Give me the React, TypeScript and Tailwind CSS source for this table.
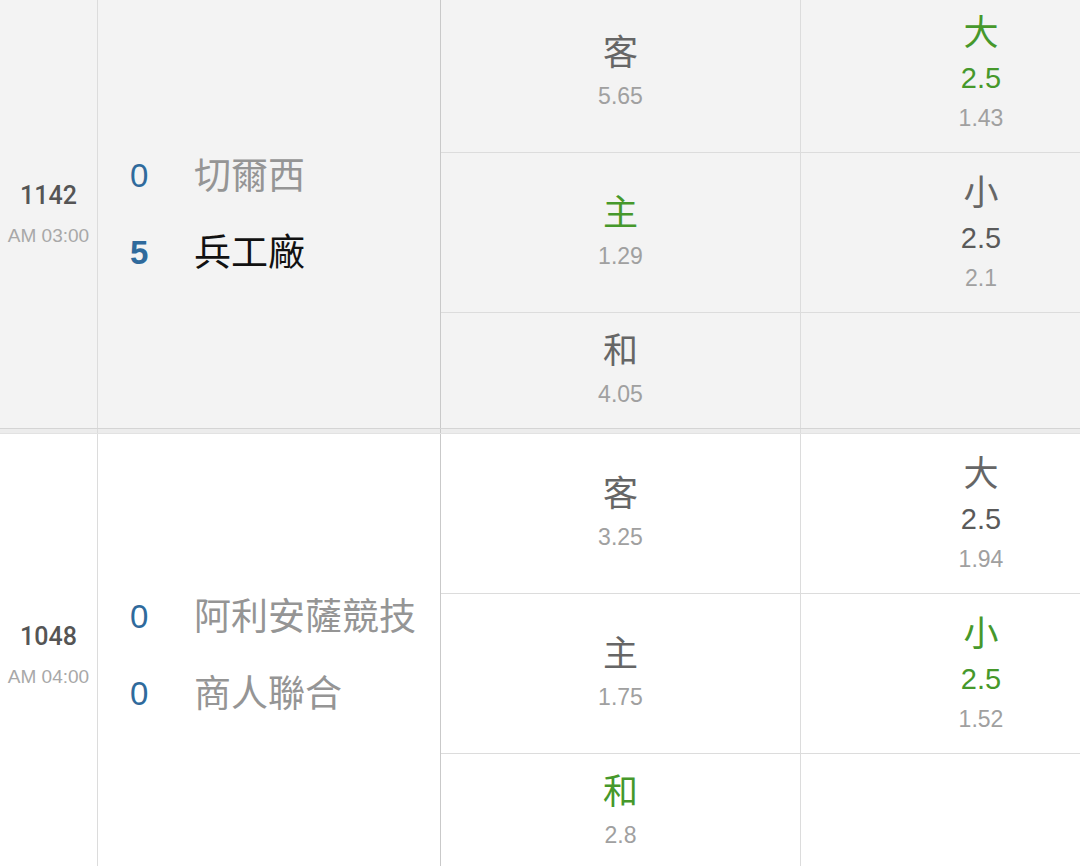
import React from "react";

type Odd = { label: string; value: string; green?: boolean };
type OU = { label: string; line: string; value: string; green?: boolean } | null;

type Match = {
  id: string;
  time: string;
  bg: string;
  away: { name: string; score: string; win?: boolean };
  home: { name: string; score: string; win?: boolean };
  odds: Odd[];
  ou: OU[];
};

const FONT = { fontFamily: '"Liberation Sans", "Noto Sans CJK TC", sans-serif' };
const CJK = { fontFamily: '"Noto Sans CJK TC", sans-serif' };

const matches: Match[] = [
  {
    id: "1142",
    time: "AM 03:00",
    bg: "bg-[#f3f3f3]",
    away: { name: "切爾西", score: "0" },
    home: { name: "兵工廠", score: "5", win: true },
    odds: [
      { label: "客", value: "5.65" },
      { label: "主", value: "1.29", green: true },
      { label: "和", value: "4.05" },
    ],
    ou: [
      { label: "大", line: "2.5", value: "1.43", green: true },
      { label: "小", line: "2.5", value: "2.1" },
      null,
    ],
  },
  {
    id: "1048",
    time: "AM 04:00",
    bg: "bg-white",
    away: { name: "阿利安薩競技", score: "0" },
    home: { name: "商人聯合", score: "0" },
    odds: [
      { label: "客", value: "3.25" },
      { label: "主", value: "1.75" },
      { label: "和", value: "2.8", green: true },
    ],
    ou: [
      { label: "大", line: "2.5", value: "1.94" },
      { label: "小", line: "2.5", value: "1.52", green: true },
      null,
    ],
  },
];

const rowH = ["h-[160px] border-b border-[#dcdcdc]", "h-[160px] border-b border-[#dcdcdc]", "h-[115px]"];

function TeamLine({ name, score, win, dim }: { name: string; score: string; win?: boolean; dim: boolean }) {
  return (
    <div className="flex h-[77px] items-center">
      <div
        className={`w-[60px] pl-[32px] pt-[5px] text-[33px] leading-none text-[#2f6a9c] ${win ? "font-bold" : "font-normal"}`}
      >
        {score}
      </div>
      <div
        className={`ml-[36px] text-[37px] leading-none ${dim ? "text-[#959595]" : "text-[#111]"}`}
        style={CJK}
      >
        {name}
      </div>
    </div>
  );
}

function Block({ m }: { m: Match }) {
  const anyWin = m.away.win || m.home.win;
  return (
    <div className={`flex ${m.bg}`} style={FONT}>
      <div className="flex w-[98px] shrink-0 flex-col items-center justify-center border-r border-[#dcdcdc] pt-[7px]">
        <div
          className="text-[25px] font-medium leading-[28px] text-[#555]"
          style={{ fontFamily: 'Roboto, "Liberation Sans", sans-serif' }}
        >
          {m.id}
        </div>
        <div className="mt-[15px] text-[19px] leading-[22px] text-[#a8a8a8]">{m.time}</div>
      </div>
      <div className="flex w-[343px] shrink-0 flex-col justify-center border-r border-[#c9c9c9] pt-[2px]">
        <TeamLine {...m.away} dim={!m.away.win} />
        <TeamLine {...m.home} dim={!m.home.win || !anyWin} />
      </div>
      <div className="flex w-[360px] shrink-0 flex-col border-r border-[#dcdcdc]">
        {m.odds.map((o, i) => (
          <div key={i} className={`flex flex-col items-center justify-center pb-[6px] ${rowH[i]}`}>
            <div
              className={`text-[35px] leading-[40px] ${o.green ? "text-[#46982b]" : "text-[#666]"}`}
              style={CJK}
            >
              {o.label}
            </div>
            <div className="mt-[13px] text-[23px] leading-[26px] text-[#a0a0a0]">{o.value}</div>
          </div>
        ))}
      </div>
      <div className="flex w-[360px] shrink-0 flex-col">
        {m.ou.map((o, i) => (
          <div key={i} className={`flex flex-col items-center justify-center pb-[5px] ${rowH[i]}`}>
            {o && (
              <>
                <div
                  className={`text-[35px] leading-[40px] ${o.green ? "text-[#46982b]" : "text-[#666]"}`}
                  style={CJK}
                >
                  {o.label}
                </div>
                <div className={`mt-[12px] text-[29px] leading-[32px] ${o.green ? "text-[#46982b]" : "text-[#5a5a5a]"}`}>
                  {o.line}
                </div>
                <div className="mt-[11px] text-[23px] leading-[26px] text-[#a0a0a0]">{o.value}</div>
              </>
            )}
          </div>
        ))}
      </div>
    </div>
  );
}

function Separator() {
  return (
    <div className="flex h-[6px] border-t border-b border-t-[#d4d4d4] border-b-[#e2e2e2] bg-[#ececec]">
      <div className="w-[98px] shrink-0 border-r border-[#dcdcdc]" />
      <div className="w-[343px] shrink-0 border-r border-[#c9c9c9]" />
      <div className="w-[360px] shrink-0 border-r border-[#dcdcdc]" />
      <div className="w-[360px] shrink-0" />
    </div>
  );
}

export default function App() {
  return (
    <div className="h-[866px] w-[1080px] overflow-hidden bg-white">
      <div className="-mt-[7px] w-[1161px]">
        <Block m={matches[0]} />
        <Separator />
        <Block m={matches[1]} />
      </div>
    </div>
  );
}
